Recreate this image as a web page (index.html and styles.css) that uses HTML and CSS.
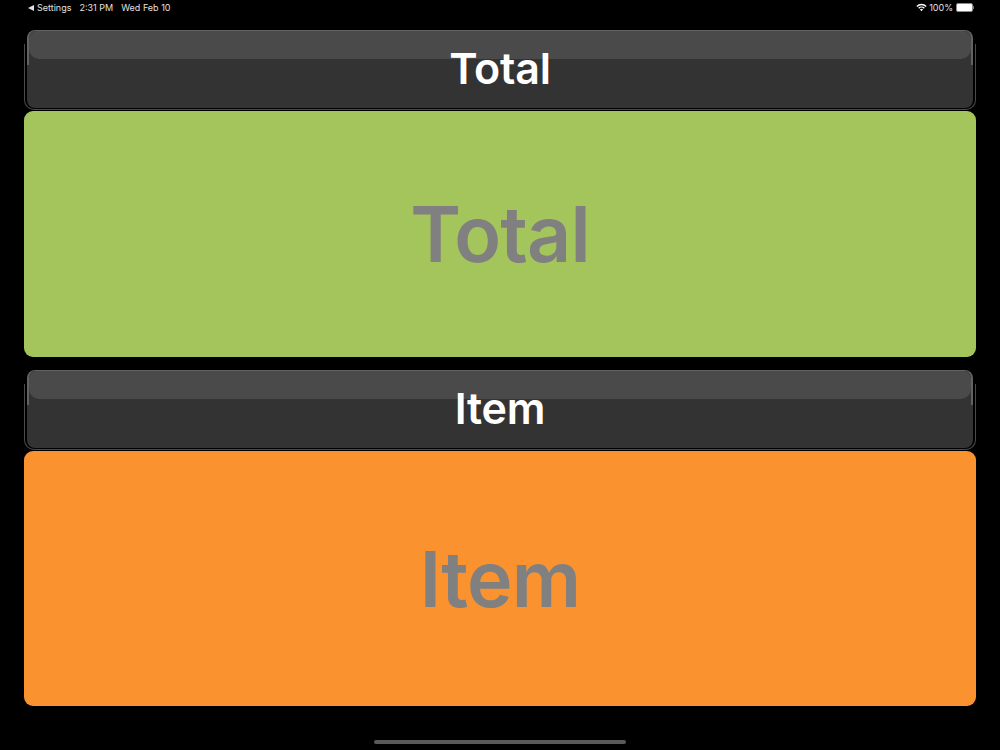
FILE: index.html
```html
<!doctype html>
<html lang="en">
<head>
    <meta charset="UTF-8" />
    <title>Totals</title>
    <link rel="stylesheet" href="styles.css">
</head>
<body>

<div class="status-bar">
    <div class="status-left">
        <span class="back-arrow"></span>
        <span class="back-label">Settings</span>
        <span class="clock">2:31 PM</span>
        <span>Wed Feb 10</span>
    </div>
    <div class="status-right">
        <svg class="wifi" width="11" height="9" viewBox="0 0 12 10">
            <path d="M0.3 3.3 A8 8 0 0 1 11.7 3.3 L10.6 4.4 A6.4 6.4 0 0 0 1.4 4.4 Z" fill="#fff"/>
            <path d="M2.3 5.3 A5.2 5.2 0 0 1 9.7 5.3 L8.6 6.4 A3.7 3.7 0 0 0 3.4 6.4 Z" fill="#fff"/>
            <path d="M4.3 7.3 A2.4 2.4 0 0 1 7.7 7.3 L6 9.2 Z" fill="#fff"/>
        </svg>
        <span>100%</span>
        <span class="battery"></span>
        <span class="battery-tip"></span>
    </div>
</div>

<div class="main">
    <div class="section">
        <div class="header">
            <div class="header-inner">Total</div>
        </div>
        <div class="panel panel-green">Total</div>
    </div>
    <div class="section section-item">
        <div class="header">
            <div class="header-inner">Item</div>
        </div>
        <div class="panel panel-orange">Item</div>
    </div>
</div>

<div class="home-row">
    <div class="home-bar"></div>
</div>

</body>
</html>
```

FILE: styles.css
```css
html, body {
    margin: 0;
    height: 750px;
    overflow: hidden;
    background-color: #000000;
    font-family: "Inter", "Liberation Sans", sans-serif;
}

.status-bar {
    height: 15px;
    padding: 0 26px 0 28px;
    display: flex;
    justify-content: space-between;
    align-items: center;
    color: #e0e0e0;
    font-size: 9px;
}
.status-left {
    display: flex;
    align-items: center;
}
.back-arrow {
    width: 0;
    height: 0;
    margin-right: 3px;
    border-top: 3px solid transparent;
    border-bottom: 3px solid transparent;
    border-right: 6px solid #e0e0e0;
}
.back-label {
    margin-right: 8px;
}
.clock {
    margin-right: 8px;
}
.status-right {
    display: flex;
    align-items: center;
}
.wifi {
    margin-right: 2px;
}
.battery {
    width: 15px;
    height: 7px;
    margin-left: 3px;
    background-color: #ffffff;
    border: 1px solid #8a8a8a;
    border-radius: 2px;
    display: block;
}
.battery-tip {
    width: 1px;
    height: 3px;
    background-color: #777777;
}

.main {
    padding: 15px 24px 0;
}
.section-item {
    margin-top: 13px;
}

.header {
    height: 80px;
    position: relative;
}
/* thin outline, open at the top */
.header::before {
    content: "";
    position: absolute;
    left: 0;
    right: 0;
    top: 14px;
    bottom: 0;
    border: 1px solid #4a4a4a;
    border-top: none;
    border-radius: 0 0 10px 10px;
}
.header-inner {
    height: 78px;
    margin: 0 3px;
    position: relative;
    z-index: 0;
    background-color: #333333;
    border-radius: 8px;
    text-align: center;
    color: #ffffff;
    font-size: 43px;
    font-weight: 600;
    letter-spacing: -0.2px;
    line-height: 77px;
    overflow: hidden;
}
/* glossy top strip */
.header-inner::before {
    content: "";
    position: absolute;
    z-index: -1;
    left: 2px;
    right: 2px;
    top: 1px;
    height: 28px;
    background-color: #4a4a4a;
    border-radius: 8px 8px 10px 10px;
}
/* lighter edge round the strip */
.header-inner::after {
    content: "";
    position: absolute;
    z-index: -2;
    left: 0;
    right: 0;
    top: 0;
    height: 35px;
    box-sizing: border-box;
    border: 2px solid #626262;
    border-top-width: 1px;
    border-bottom: none;
    border-radius: 8px 8px 0 0;
}
.panel {
    margin-top: 1px;
    display: flex;
    align-items: center;
    justify-content: center;
    border-radius: 9px;
    color: #808080;
    font-size: 77px;
    font-weight: 600;
    letter-spacing: -0.8px;
}
.panel-green {
    height: 246px;
    background-color: #a4c45c;
}
.panel-orange {
    height: 255px;
    background-color: #fb9230;
}

.home-row {
    display: flex;
    justify-content: center;
    margin-top: 34px;
}
.home-bar {
    width: 252px;
    height: 4px;
    border-radius: 2px;
    background-color: #5a5a5a;
}
```
